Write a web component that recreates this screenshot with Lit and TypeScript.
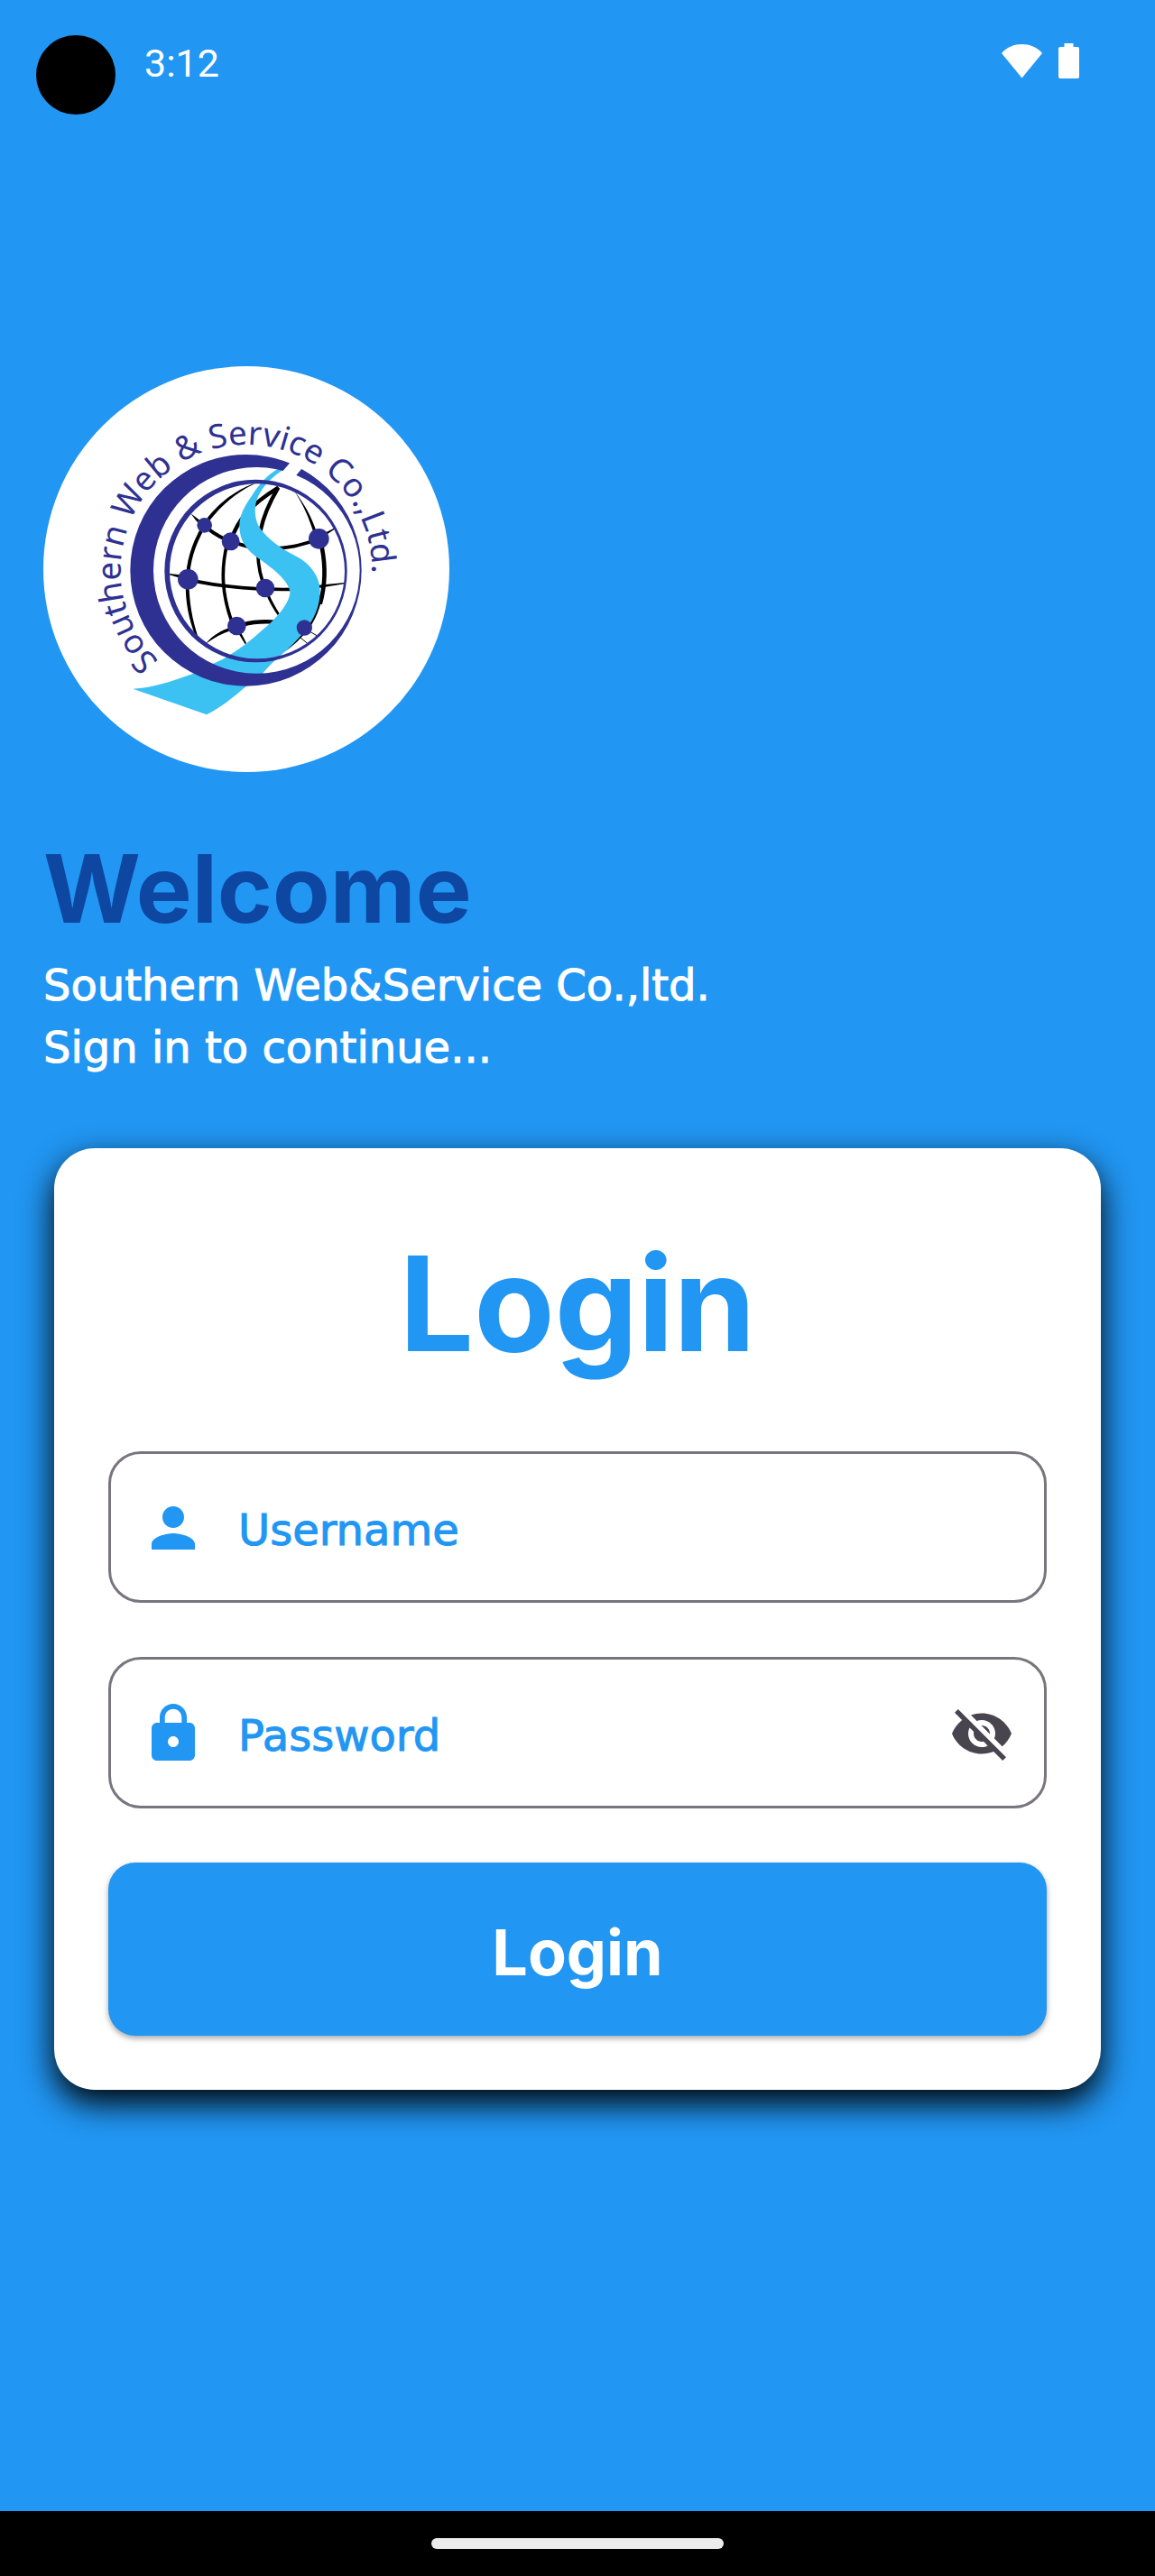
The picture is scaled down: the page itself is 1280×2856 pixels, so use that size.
import { LitElement, html, css, svg } from "lit";
import { customElement, state } from "lit/decorators.js";

@customElement("status-bar")
export class StatusBar extends LitElement {
  static styles = css`
    :host {
      display: flex;
      align-items: flex-start;
      gap: 32px;
      padding: 39px 84px 0 40px;
      color: #fff;
      font-family: Roboto, sans-serif;
    }
    .camera {
      width: 88px;
      height: 88px;
      border-radius: 50%;
      background: #000;
    }
    .time {
      flex: 1;
      font-size: 43px;
      line-height: 62px;
    }
    .icons {
      display: flex;
      align-items: center;
      gap: 18px;
      height: 56px;
    }
    .icons svg {
      display: block;
      fill: currentColor;
    }
  `;

  render() {
    return html`
      <span class="camera"></span>
      <span class="time">3:12</span>
      <span class="icons">
        <svg width="45" height="39" viewBox="0 0 45 39" aria-hidden="true">
          <path d="M22.500 38.500 0 11C6 4 14 1 22.500 1S39 4 45 11Z" />
        </svg>
        <svg width="23" height="39" viewBox="0 0 23 39" aria-hidden="true">
          <path d="M6.500 0H16.500V4H21Q23 4 23 6V37Q23 39 21 39H2Q0 39 0 37V6Q0 4 2 4H6.500Z" />
        </svg>
      </span>
    `;
  }
}

const NODES = [
  [561, 548, 25],
  [648, 602, 30],
  [941, 593, 34],
  [506, 728, 34],
  [763, 757, 31],
  [668, 883, 31],
  [893, 889, 26],
];

@customElement("company-logo")
export class CompanyLogo extends LitElement {
  static styles = css`
    :host {
      display: block;
      width: 450px;
      height: 450px;
      border-radius: 50%;
      background: #fff;
    }
    svg {
      display: block;
      width: 100%;
      height: 100%;
    }
    .navy {
      fill: #2e3192;
    }
    .ribbon {
      fill: #3cc1f3;
    }
    .gap {
      fill: #fff;
    }
    .line {
      fill: none;
      stroke: #000;
    }
    .name {
      fill: #2e3192;
      font-family: "Noto Sans", sans-serif;
      font-size: 110px;
    }
  `;

  render() {
    return html`
      <svg viewBox="25 19 1350 1350" role="img" aria-label="Southern Web &amp; Service Co.,Ltd.">
        <defs>
          <path id="arc" d="M410 999A418 418 0 1 1 1118 698A418 418 0 0 1 1086 860" />
        </defs>

        <!-- globe: tapered meridians and parallels -->
        <path d="M725 409C650 437 602 485 570 524L578 532C612 490 655 445 725 411Z" />
        <path class="line" stroke-width="12" d="M556 556C528 605 506 660 505 728" />
        <path d="M498 740C498 810 509 860 530 915L538 915C520 860 511 810 509 740Z" />
        <path class="line" stroke-width="13" d="M648 602C668 535 710 482 806 423C775 475 757 515 746 570" />
        <path class="line" stroke-width="11" d="M738 640C740 690 748 725 763 757" />
        <path d="M765 775L777 780C785 800 797 820 810 842L804 847C788 825 774 800 765 775Z" />
        <path class="line" stroke-width="11" d="M636 610C614 700 620 780 652 870" />
        <path d="M674 908 683 906 700 940 696 944Z" />
        <path d="M515 509 545 531 537 538Z" />
        <path class="line" stroke-width="12" d="M570 558C592 575 618 592 648 602C680 612 705 620 740 628" />
        <path class="line" stroke-width="11" d="M780 625C840 626 880 614 930 598" />
        <path d="M966 571 991 558 992 562 969 578Z" />
        <path d="M444 709 478 713 474 722 444 713Z" />
        <path class="line" stroke-width="11" d="M530 734C620 752 720 764 860 761" />
        <path d="M940 747 1026 739 1026 743 940 757Z" />
        <path d="M566 941C590 912 622 895 655 886L658 895C625 905 595 920 567 941Z" />
        <path class="line" stroke-width="13" d="M690 878C725 868 755 867 800 870" />
        <path d="M858 432C890 472 917 518 934 572L924 574C908 522 888 476 858 432Z" />
        <path class="line" stroke-width="14" d="M951 620C965 690 962 750 945 810" />
        <path d="M952 780C948 820 930 860 910 890C882 925 855 950 828 968C852 940 870 920 886 902C915 868 930 830 938 780Z" />
        <path class="line" stroke-width="3" d="M910 901 934 915M879 921 903 941" />

        <path
          class="ribbon"
          d="M802 362C770 382 742 412 720 447C692 487 677 515 677 550C677 600 702 632 740 658C795 695 845 740 845 771C845 800 810 850 755 895C700 945 645 985 590 1008L520 1043C450 1068 385 1090 323 1092L568 1178C615 1153 655 1122 700 1083L755 1040C775 1015 808 985 838 960C890 910 946 850 945 765C943 710 905 670 860 648C815 625 770 592 746 558C726 530 725 485 738 455C757 415 785 387 835 355Z"
        />
        <path
          class="navy"
          fill-rule="evenodd"
          d="M428 700A303.500 304 0 1 1 1035 700A303.500 304 0 1 1 428 700ZM445 701A291 291 0 1 0 1027 701A291 291 0 1 0 445 701Z"
        />
        <path
          class="navy"
          fill-rule="evenodd"
          d="M314 698A384.500 385 0 1 1 1083 698A384.500 385 0 1 1 314 698ZM391 698A343 343 0 1 0 1077 698A343 343 0 1 0 391 698Z"
        />
        <path class="gap" d="M850 335 819 370 863 385 891 352Z" />
        ${NODES.map(([x, y, r]) => svg`<circle class="navy" cx=${x} cy=${y} r=${r}></circle>`)}

        <text class="name"><textPath href="#arc">Southern Web &amp; Service Co.,Ltd.</textPath></text>
      </svg>
    `;
  }
}

@customElement("login-card")
export class LoginCard extends LitElement {
  static styles = css`
    :host {
      display: block;
      padding: 60px;
      border-radius: 45px;
      background: #fff;
      box-shadow: 0 15px 36px #000;
    }
    .title {
      margin: 0 0 52px;
      color: #2196f3;
      font-size: 146px;
      font-weight: 700;
      line-height: 224px;
      text-align: center;
    }
    .form {
      display: flex;
      flex-direction: column;
      gap: 60px;
    }
    .field {
      display: flex;
      align-items: center;
      box-sizing: border-box;
      height: 168px;
      padding: 2px 33px 0;
      border: 3px solid #79747e;
      border-radius: 36px;
    }
    .lead {
      color: #2196f3;
    }
    .icon {
      display: block;
      width: 72px;
      height: 72px;
      fill: currentColor;
    }
    .input {
      flex: 1;
      min-width: 0;
      padding: 4px 36px 0;
      border: 0;
      outline: 0;
      background: none;
      color: #2196f3;
      font-family: "DejaVu Sans", sans-serif;
      font-size: 48px;
      line-height: 72px;
      -webkit-text-stroke: 1px currentColor;
    }
    .input::placeholder {
      color: #2196f3;
      opacity: 1;
    }
    .toggle {
      padding: 0;
      border: 0;
      background: none;
      color: #49454f;
      cursor: pointer;
    }
    .submit {
      height: 192px;
      padding: 6px 0 0;
      border: 0;
      border-radius: 30px;
      background: #2196f3;
      box-shadow: 0 3px 6px rgba(0, 0, 0, 0.35);
      color: #fff;
      font: inherit;
      font-size: 70px;
      font-weight: 700;
      cursor: pointer;
    }
  `;

  @state() private revealed = false;

  render() {
    return html`
      <h2 class="title">Login</h2>
      <form class="form" @submit=${(e: Event) => e.preventDefault()}>
        <div class="field">
          <label class="lead" for="username" aria-label="Username">
            <svg class="icon" viewBox="0 0 24 24" aria-hidden="true">
              <path d="M12 12c2.210 0 4-1.790 4-4s-1.790-4-4-4-4 1.790-4 4 1.790 4 4 4zm0 2c-2.670 0-8 1.340-8 4v2h16v-2c0-2.660-5.330-4-8-4z" />
            </svg>
          </label>
          <input class="input" id="username" type="text" placeholder="Username" autocomplete="username" />
        </div>
        <div class="field">
          <label class="lead" for="password" aria-label="Password">
            <svg class="icon" viewBox="0 0 24 24" aria-hidden="true">
              <path d="M18 8h-1V6c0-2.760-2.240-5-5-5S7 3.240 7 6v2H6c-1.100 0-2 .9-2 2v10c0 1.100.9 2 2 2h12c1.100 0 2-.9 2-2V10c0-1.100-.9-2-2-2zm-6 9c-1.100 0-2-.9-2-2s.9-2 2-2 2 .9 2 2-.9 2-2 2zm3.100-9H8.900V6c0-1.710 1.390-3.100 3.100-3.100 1.710 0 3.100 1.390 3.100 3.100v2z" />
            </svg>
          </label>
          <input
            class="input"
            id="password"
            type=${this.revealed ? "text" : "password"}
            placeholder="Password"
            autocomplete="current-password"
          />
          <button
            class="toggle"
            type="button"
            aria-label="Show password"
            aria-pressed=${this.revealed ? "true" : "false"}
            @click=${() => (this.revealed = !this.revealed)}
          >
            <svg class="icon" viewBox="0 0 24 24" aria-hidden="true">
              <path d="M12 7c2.760 0 5 2.240 5 5 0 .65-.13 1.260-.36 1.830l2.920 2.920c1.510-1.260 2.700-2.890 3.430-4.750-1.730-4.390-6-7.500-11-7.500-1.400 0-2.740.25-3.980.7l2.160 2.160C10.740 7.130 11.350 7 12 7zM2 4.270l2.280 2.280.46.46C3.080 8.300 1.780 10.020 1 12c1.730 4.390 6 7.500 11 7.500 1.550 0 3.030-.3 4.380-.84l.42.42L19.730 22 21 20.730 3.270 3 2 4.270zM7.530 9.800l1.550 1.550c-.05.21-.08.43-.08.65 0 1.660 1.340 3 3 3 .22 0 .44-.03.65-.08l1.550 1.550c-.67.33-1.410.53-2.200.53-2.760 0-5-2.240-5-5 0-.79.2-1.530.53-2.200zm4.310-.78l3.150 3.150.02-.16c0-1.660-1.340-3-3-3l-.17.01z" />
            </svg>
          </button>
        </div>
        <button class="submit" type="submit">Login</button>
      </form>
    `;
  }
}

@customElement("app-root")
export class AppRoot extends LitElement {
  static styles = css`
    :host {
      display: flex;
      flex-direction: column;
      min-height: 100vh;
      background: #2196f3;
      font-family: Inter, "Noto Sans", sans-serif;
    }
    .hero {
      padding: 279px 48px 0;
    }
    .welcome {
      margin: 69px 0 13px;
      color: #0d47a1;
      font-size: 104px;
      font-weight: 700;
      line-height: 120px;
    }
    .lines {
      margin: 0;
      color: #fff;
      font-family: "DejaVu Sans", sans-serif;
      font-size: 48px;
      line-height: 69px;
      -webkit-text-stroke: 1px currentColor;
    }
    .card {
      margin: 77px 60px 0;
    }
    .navigation {
      display: flex;
      align-items: center;
      justify-content: center;
      height: 72px;
      margin-top: auto;
      background: #000;
    }
    .handle {
      width: 324px;
      height: 12px;
      border-radius: 6px;
      background: #ebebeb;
    }
  `;

  render() {
    return html`
      <status-bar></status-bar>
      <header class="hero">
        <company-logo></company-logo>
        <h1 class="welcome">Welcome</h1>
        <p class="lines">Southern Web&amp;Service Co.,ltd.</p>
        <p class="lines">Sign in to continue...</p>
      </header>
      <login-card class="card"></login-card>
      <footer class="navigation"><span class="handle"></span></footer>
    `;
  }
}
